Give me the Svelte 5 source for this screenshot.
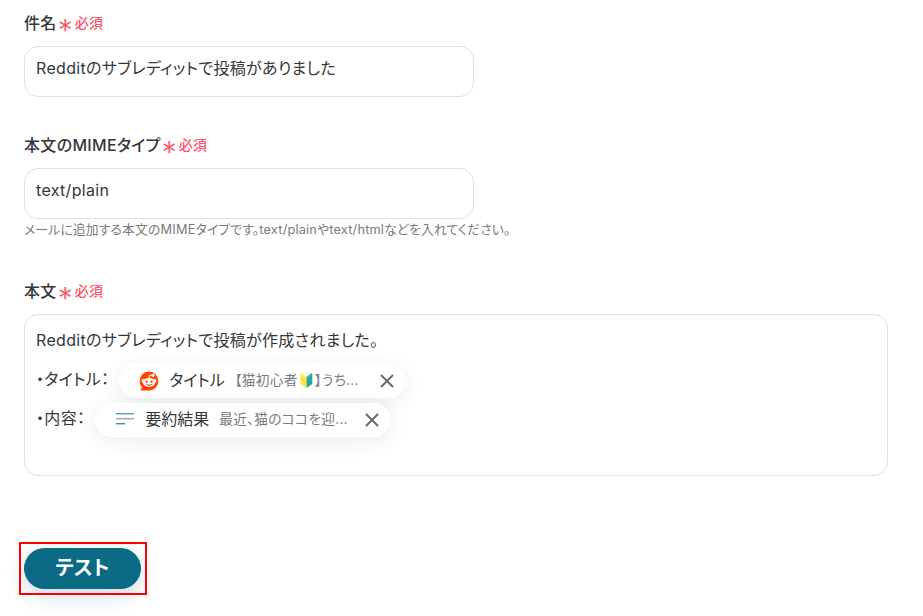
<script>
  const chips = [
    { prefix: '・タイトル：', label: 'タイトル', value: '【猫初心者🔰】うち...', icon: 'reddit' },
    { prefix: '・内容：', label: '要約結果', value: '最近、猫のココを迎...', icon: 'lines' }
  ];
</script>

<main class="page">
  <section class="field first">
    <div class="label"><span>件名</span><span class="star">*</span><span class="req">必須</span></div>
    <div class="input">Redditのサブレディットで投稿がありました</div>
  </section>

  <section class="field second">
    <div class="label"><span>本文のMIMEタイプ</span><span class="star">*</span><span class="req">必須</span></div>
    <div class="input">text/plain</div>
    <p class="hint">メールに追加する本文のMIMEタイプです。text/plainやtext/htmlなどを入れてください。</p>
  </section>

  <section class="field third">
    <div class="label"><span>本文</span><span class="star">*</span><span class="req">必須</span></div>
    <div class="area">
      <div class="line">Redditのサブレディットで投稿が作成されました。</div>
      {#each chips as c, i}
        <div class="line row" class:r2={i === 1}>
          <span class="prefix">{c.prefix}</span>
          <span class="chip" class:chip2={i === 1}>
            {#if c.icon === 'reddit'}
              <svg class="ic" width="20" height="20" viewBox="0 0 20 20">
                <path d="M10 .6a9.4 9.4 0 0 0-9.4 9.4c0 2.6 1 4.9 2.7 6.6L1.5 18.600c-.3.4 0 .8.4.8H10A9.400 9.400 0 0 0 10 .6z" fill="#ff4500"/>
                <ellipse cx="10" cy="11.300" rx="6.200" ry="4.400" fill="#fff"/>
                <circle cx="4.200" cy="9.800" r="1.700" fill="#fff"/>
                <circle cx="15.800" cy="9.800" r="1.700" fill="#fff"/>
                <circle cx="14" cy="4.300" r="1.600" fill="#fff"/>
                <path d="M10 7.500 10.800 4 13.500 4.500" stroke="#fff" stroke-width=".9" fill="none"/>
                <circle cx="7.600" cy="10.600" r="1.200" fill="#ff4500"/>
                <circle cx="12.400" cy="10.600" r="1.200" fill="#ff4500"/>
                <path d="M7.300 13.300c1.500 1.100 3.900 1.100 5.400 0" stroke="#7a3a22" stroke-width=".9" fill="none"/>
              </svg>
            {:else}
              <svg class="ic" width="20" height="20" viewBox="0 0 20 20">
                <rect x="1" y="3" width="18" height="1.400" fill="#5a9fb5"/>
                <rect x="1" y="8" width="18" height="1.400" fill="#8fa9b5"/>
                <rect x="1" y="13" width="9" height="1.400" fill="#3f8aa3"/>
              </svg>
            {/if}
            <span class="chip-label">{c.label}</span>
            <span class="chip-value">{c.value}</span>
            <svg class="x" width="14" height="14" viewBox="0 0 14 14">
              <path d="M1 1l12 12M13 1 1 13" stroke="#666a70" stroke-width="2" fill="none"/>
            </svg>
          </span>
        </div>
      {/each}
    </div>
  </section>

  <div class="focus"><button class="test">テスト</button></div>
</main>

<style>
  :global(body) {
    margin: 0;
    background: #fff;
  }
  .page {
    height: 616px;
    overflow: hidden;
    box-sizing: border-box;
    padding: 12px 0 0 24px;
    font-family: Inter, "Noto Sans CJK JP", sans-serif;
    font-feature-settings: "palt";
    color: #33363a;
  }
  .field {
    display: flex;
    flex-direction: column;
  }
  .second {
    margin-top: 37px;
  }
  .third {
    margin-top: 42px;
  }
  .label {
    display: flex;
    align-items: center;
    height: 22px;
    font-size: 16px;
    font-weight: 500;
    letter-spacing: .02em;
    line-height: 22px;
    margin-bottom: 12px;
  }
  .star {
    color: #fb5468;
    font-size: 30px;
    font-weight: 300;
    margin: 13px 5px 0 1px;
    line-height: 22px;
    width: 12px;
    text-align: center;
  }
  .req {
    color: #fb5468;
    font-size: 14px;
    font-weight: 500;
  }
  .input {
    box-sizing: border-box;
    width: 450px;
    height: 51px;
    border: 1px solid #dfe0e6;
    border-radius: 14px;
    padding: 10px 11px 0;
    font-size: 16px;
    line-height: 22px;
    letter-spacing: .02em;
  }
  .hint {
    margin: 3px 0 0;
    font-size: 12.800px;
    line-height: 16px;
    letter-spacing: .0135em;
    color: #777a80;
  }
  .area {
    box-sizing: border-box;
    width: 864px;
    height: 162px;
    border: 1px solid #dfe0e6;
    border-radius: 14px;
    padding: 14px 11px 0;
    font-size: 16px;
    line-height: 22px;
    letter-spacing: .02em;
  }
  .row {
    display: flex;
    align-items: center;
    margin-top: 13px;
  }
  .r2 {
    margin-top: 5px;
  }
  .prefix {
    margin-top: -5px;
    white-space: nowrap;
  }
  .chip {
    display: flex;
    align-items: center;
    height: 34px;
    width: 286px;
    box-sizing: border-box;
    padding-left: 20px;
    margin-left: 10px;
    border-radius: 17px;
    background: #fff;
    box-shadow: 0 4px 20px rgba(30, 40, 60, .09);
    letter-spacing: 0;
  }
  .chip2 {
    width: 295px;
  }
  .ic {
    flex: none;
  }
  .chip-label {
    margin: -2px 0 0 10px;
    font-size: 16px;
    white-space: nowrap;
  }
  .chip-value {
    margin: -2px 0 0 10px;
    font-size: 13.700px;
    letter-spacing: .02em;
    color: #777a80;
    white-space: nowrap;
    flex: 1;
  }
  .x {
    flex: none;
    margin-right: 11px;
  }
  .focus {
    display: inline-block;
    margin: 66px 0 0 -5px;
    padding: 4px 4px 4px 3px;
    border: 2px solid #f00;
  }
  .test {
    display: block;
    width: 117px;
    height: 41px;
    padding: 0 0 4px;
    border: 0;
    border-radius: 21px;
    background: #0b6a85;
    color: #fff;
    font-family: inherit;
    font-feature-settings: "palt";
    font-size: 20px;
    font-weight: 700;
    box-shadow: 0 6px 20px rgba(30, 50, 80, .2);
  }
</style>
